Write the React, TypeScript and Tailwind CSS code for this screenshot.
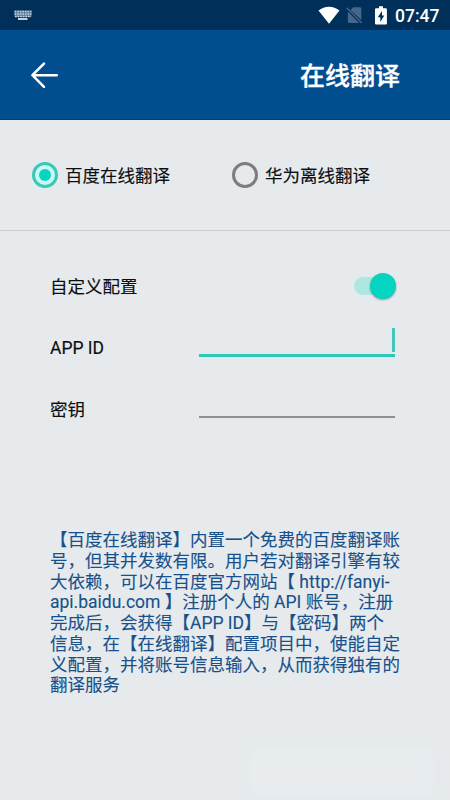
import React from "react";

const lines: string[] = [
  "【百度在线翻译】内置一个免费的百度翻译账",
  "号，但其并发数有限。用户若对翻译引擎有较",
  "大依赖，可以在百度官方网站【 http://fanyi-",
  "api.baidu.com 】注册个人的 API 账号，注册",
  "完成后，会获得【APP ID】与【密码】两个",
  "信息，在【在线翻译】配置项目中，使能自定",
  "义配置，并将账号信息输入，从而获得独有的",
  "翻译服务",
];

function KeyboardIcon() {
  return (
    <svg width="18" height="12" viewBox="0 0 18 12" className="text-[#c3d2df]">
      <rect x="0.5" y="1.5" width="17" height="6.5" fill="currentColor" opacity="0.45" />
      <path
        d="M0.5 2.4h17M0.5 4.9h17M1 7.4h16"
        stroke="currentColor"
        strokeWidth="1.5"
        strokeDasharray="1.7 0.9"
      />
      <path d="M4 10h9.5" stroke="currentColor" strokeWidth="2" />
    </svg>
  );
}

function StatusBar() {
  return (
    <div className="flex h-[30px] items-center bg-[#002f59] pr-[10px] pl-[13.5px] text-white">
      <KeyboardIcon />
      <svg width="22" height="18" viewBox="0 0 22 18" className="ml-auto">
        <path d="M0.5 4.6C6.5 -0.6 15.5 -0.6 21.5 4.6L11 17.8Z" fill="currentColor" />
      </svg>
      <svg width="17" height="18" viewBox="0 0 17 18" className="ml-[6.5px]">
        <path d="M7.2 1.2H14a1.3 1.3 0 0 1 1.3 1.3v11.4L4.4 4Z" fill="#45678a" />
        <path d="M1.9 5.8 13.2 17H3.2a1.3 1.3 0 0 1-1.3-1.3Z" fill="#45678a" />
        <path d="M0.6 1.8 15.8 17" stroke="#45678a" strokeWidth="1.3" />
      </svg>
      <svg width="12" height="19" viewBox="0 0 12 19" className="ml-[12px]">
        <path
          d="M4 0.3h4v2h2.7a1.2 1.2 0 0 1 1.2 1.2v13.8a1.2 1.2 0 0 1-1.2 1.2H1.2A1.2 1.2 0 0 1 0 17.3V3.5a1.2 1.2 0 0 1 1.2-1.2H4Z"
          fill="currentColor"
        />
        <path d="M7 5 2.8 11.3h2.5V16l4-6.4H7Z" fill="#002f59" />
      </svg>
      <span className="ml-[8px] w-[45px] pt-px text-[17.5px] leading-[30px] font-medium whitespace-nowrap">
        07:47
      </span>
    </div>
  );
}

export default function App() {
  return (
    <div className="h-[800px] w-[450px] overflow-hidden bg-[#e6eaed] font-['Roboto','Noto_Sans_CJK_SC',sans-serif] text-[17.5px] text-[#0c0e10]">
      <StatusBar />
      <header className="flex h-[90px] items-center justify-between border-b border-[#003f78] bg-[#004d8f] pr-[50px] pl-[30px] text-white">
        <svg
          width="29"
          height="28"
          viewBox="0 0 29 28"
          fill="none"
          stroke="currentColor"
          strokeWidth="2.5"
          strokeLinecap="round"
          strokeLinejoin="round"
        >
          <path d="M14 2.6 2.4 14.2 14 25.8M2.4 14.2h24.4" />
        </svg>
        <h1 className="pt-[4px] text-[25px] leading-[36px] font-medium [-webkit-text-stroke:0.35px_white]">
          在线翻译
        </h1>
      </header>

      <div className="flex h-[111px] border-b border-[#c9cdd0] pl-[32px] [-webkit-text-stroke:0.15px_#0c0e10]">
        <label className="flex h-[110px] w-[200px] items-center">
          <span className="flex size-[26px] items-center justify-center rounded-full border-[3px] border-[#3cc8b9] bg-[#c9f8f2]">
            <span className="size-[12px] rounded-full bg-[#05d5c0]" />
          </span>
          <span className="ml-[7px] pt-[2px]">百度在线翻译</span>
        </label>
        <label className="flex h-[110px] items-center">
          <span className="size-[26px] rounded-full border-[3px] border-[#7b7d80]" />
          <span className="ml-[7px] pt-[2px]">华为离线翻译</span>
        </label>
      </div>

      <div className="pt-[24px] pr-[54px] pl-[50px] [-webkit-text-stroke:0.15px_#0c0e10]">
        <div className="flex h-[62px] items-center justify-between">
          <span className="pt-[2px]">自定义配置</span>
          <span className="flex h-[18px] w-[42px] items-center justify-end rounded-full bg-[#ace8e1]">
            <span className="size-[26px] shrink-0 rounded-full bg-[#05d5c0] shadow-[0_1px_2px_rgba(0,0,0,0.35)]" />
          </span>
        </div>
        <div className="flex h-[62px] items-center justify-between">
          <span>APP ID</span>
          <div className="mt-[-11px] mr-px flex h-[29px] w-[196px] justify-end border-b-[3px] border-[#2cc8b8]">
            <span className="h-[24px] w-[3px] bg-[#45c4b8]" />
          </div>
        </div>
        <div className="flex h-[62px] items-center justify-between">
          <span>密钥</span>
          <div className="mt-[-13px] mr-px h-[29px] w-[196px] border-b-2 border-[#8d9194]" />
        </div>
      </div>

      <p className="mt-[89px] ml-[50px] text-[17.5px] leading-[20.75px] text-[#17518b] [-webkit-text-stroke:0.12px_#17518b]">
        {lines.map((line) => (
          <span key={line} className="block whitespace-nowrap">
            {line}
          </span>
        ))}
      </p>
      <div className="mt-[54px] ml-[250px] h-[44px] w-[182px] bg-[#e8ecef] blur-[3px]" />
    </div>
  );
}
